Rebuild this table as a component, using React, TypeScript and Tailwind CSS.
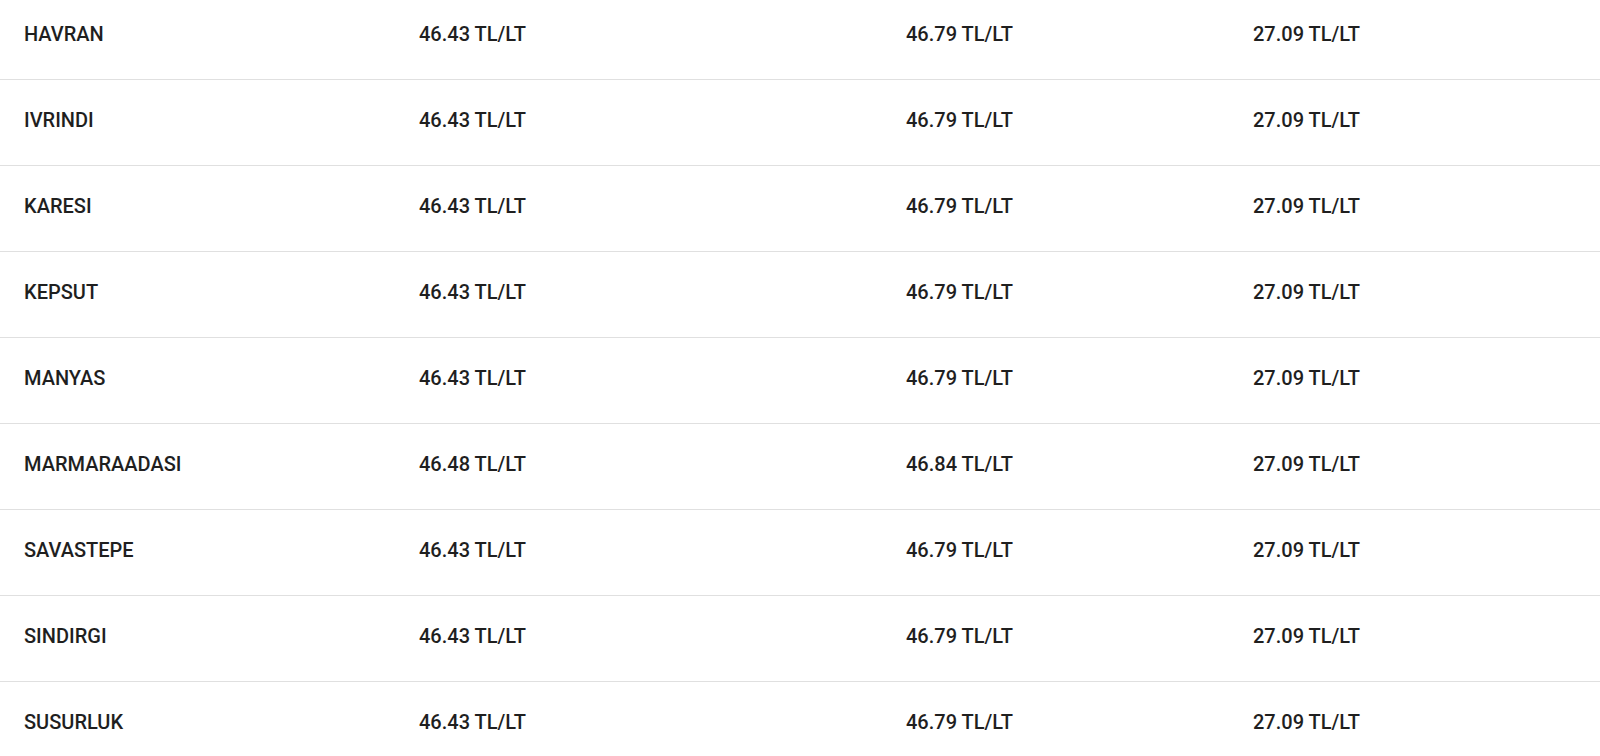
import React from 'react';

const rows = [
  { name: "HAVRAN", benzin: "46.43", motorin: "46.79", lpg: "27.09" },
  { name: "IVRINDI", benzin: "46.43", motorin: "46.79", lpg: "27.09" },
  { name: "KARESI", benzin: "46.43", motorin: "46.79", lpg: "27.09" },
  { name: "KEPSUT", benzin: "46.43", motorin: "46.79", lpg: "27.09" },
  { name: "MANYAS", benzin: "46.43", motorin: "46.79", lpg: "27.09" },
  { name: "MARMARAADASI", benzin: "46.48", motorin: "46.84", lpg: "27.09" },
  { name: "SAVASTEPE", benzin: "46.43", motorin: "46.79", lpg: "27.09" },
  { name: "SINDIRGI", benzin: "46.43", motorin: "46.79", lpg: "27.09" },
  { name: "SUSURLUK", benzin: "46.43", motorin: "46.79", lpg: "27.09" },
];

export default function App() {
  return (
    <div className="h-[756px] overflow-hidden bg-white font-['Roboto',sans-serif] text-[#1f1f1f]">
      <div className="-mt-[6px]">
        {rows.map((row) => (
          <div
            key={row.name}
            className="grid h-[86px] grid-cols-[395px_487px_347px_1fr] items-center border-b border-[#e0e0e0] pb-[5px] text-[20px] font-medium"
          >
            <div className="pl-6">{row.name}</div>
            <div className="pl-6">{row.benzin} TL/LT</div>
            <div className="pl-6">{row.motorin} TL/LT</div>
            <div className="pl-6">{row.lpg} TL/LT</div>
          </div>
        ))}
      </div>
    </div>
  );
}
